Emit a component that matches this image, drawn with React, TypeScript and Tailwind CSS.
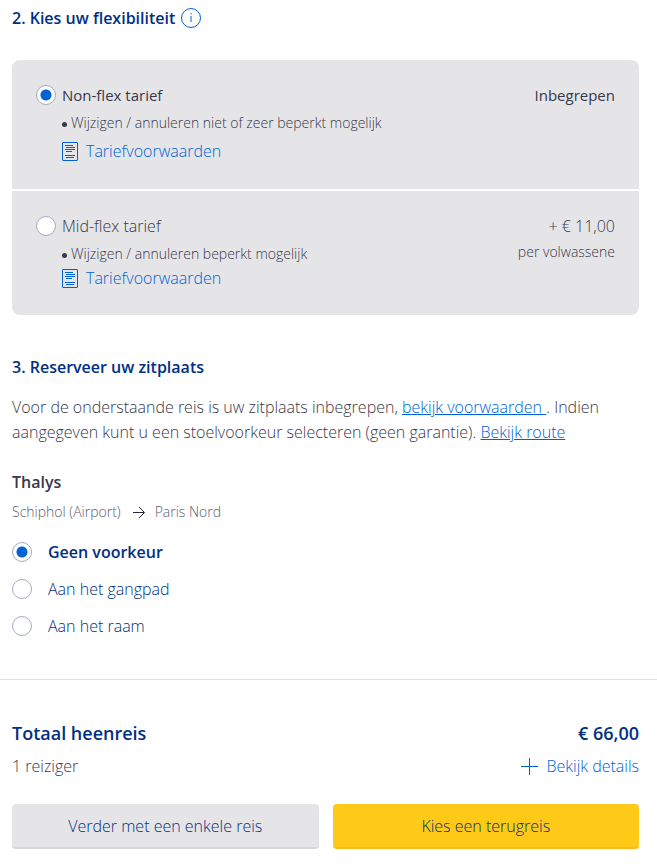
import type { ReactNode } from "react";

type RadioProps = { id: string; name: string; defaultChecked?: boolean };

function Radio({ id, name, defaultChecked }: RadioProps) {
  return (
    <input
      id={id}
      name={name}
      type="radio"
      defaultChecked={defaultChecked}
      className="size-5 shrink-0 appearance-none rounded-full border border-[#a3abc0] bg-white checked:bg-[radial-gradient(circle,#0063d3_5px,#fff_6px)]"
    />
  );
}

function DocumentIcon() {
  return (
    <svg width="16" height="19" viewBox="0 0 16 19" fill="none" stroke="#0063d3" className="shrink-0" aria-hidden="true">
      <rect x="0.5" y="0.5" width="15" height="18" rx="0.5" />
      <path d="M3 3.5h8M4 5.5h9M3 7.5h10M4 9.5h6M3 13.5h10M4 15.5h8" />
    </svg>
  );
}

type FareProps = {
  id: string;
  title: string;
  detail: string;
  price: string;
  note?: string;
  selected?: boolean;
  linkGap: string;
  className: string;
};

function Fare({ id, title, detail, price, note, selected, linkGap, className }: FareProps) {
  const weight = selected ? "text-[15px] font-medium" : "text-base font-light";
  return (
    <div className={`flex justify-between bg-[#e5e5e8] px-6 ${className}`}>
      <div className="flex gap-1.5">
        <div className="flex h-6 items-center">
          <Radio id={id} name="fare" defaultChecked={selected} />
        </div>
        <div>
          <label htmlFor={id} className={`block leading-6 ${weight}`}>
            {title}
          </label>
          <ul className="mt-1.5 text-sm leading-5">
            <li className="flex items-center gap-1">
              <span className="mt-0.5 size-[5px] rounded-full bg-[#38384a]" />
              {detail}
            </li>
          </ul>
          <a href="#tariefvoorwaarden" className={`flex items-center gap-2 leading-6 text-[#0063d3] ${linkGap}`}>
            <DocumentIcon />
            Tariefvoorwaarden
          </a>
        </div>
      </div>
      <div className="text-right">
        <p className={`leading-6 ${weight}`}>{price}</p>
        {note && <p className="mt-1 text-sm leading-5">{note}</p>}
      </div>
    </div>
  );
}

function Heading({ children }: { children: ReactNode }) {
  return <h2 className="leading-6 font-semibold text-[#003082]">{children}</h2>;
}

const seats = [
  { id: "geen", label: "Geen voorkeur" },
  { id: "gangpad", label: "Aan het gangpad" },
  { id: "raam", label: "Aan het raam" },
];

export default function App() {
  return (
    <main className="bg-white font-['Open_Sans',sans-serif] text-base font-light text-[#38384a]">
      <section className="pt-1.5 pr-[18px] pl-3">
        <div className="flex items-center gap-1.5">
          <Heading>2. Kies uw flexibiliteit</Heading>
          <button type="button" aria-label="Meer informatie">
            <svg width="20" height="20" viewBox="0 0 20 20" fill="none" stroke="#0063d3" aria-hidden="true">
              <circle cx="10" cy="10" r="9.5" />
              <path d="M10 8v6M10 5v1.5" />
            </svg>
          </button>
        </div>

        <div className="mt-[30px] flex flex-col gap-0.5 overflow-hidden rounded-lg">
          <Fare
            id="non-flex"
            title="Non-flex tarief"
            detail="Wijzigen / annuleren niet of zeer beperkt mogelijk"
            price="Inbegrepen"
            selected
            linkGap="mt-1.5"
            className="pt-[23px] pb-[26px]"
          />
          <Fare
            id="mid-flex"
            title="Mid-flex tarief"
            detail="Wijzigen / annuleren beperkt mogelijk"
            price="+ € 11,00"
            note="per volwassene"
            linkGap="mt-0.5"
            className="pt-[23px] pb-[25px]"
          />
        </div>

        <div className="mt-10">
          <Heading>3. Reserveer uw zitplaats</Heading>
        </div>
        <p className="mt-4 leading-[25px]">
          Voor de onderstaande reis is uw zitplaats inbegrepen,{" "}
          <a href="#voorwaarden" className="text-[#0063d3] underline">bekijk voorwaarden </a>. Indien aangegeven kunt u
          een stoelvoorkeur selecteren (geen garantie).{" "}
          <a href="#route" className="text-[#0063d3] underline">Bekijk route</a>
        </p>

        <h3 className="mt-[25px] leading-6 font-semibold">Thalys</h3>
        <p className="mt-2 flex items-center text-sm leading-5 text-[#5c5c6b]">
          Schiphol (Airport)
          <svg width="12" height="12" viewBox="0 0 12 12" fill="none" stroke="#29293a" className="mr-2.5 ml-3" aria-hidden="true">
            <path d="M0 6.5h11M6 1l5.5 5.5L6 12" />
          </svg>
          Paris Nord
        </p>

        <fieldset aria-label="Stoelvoorkeur" className="mt-[18px] flex flex-col gap-[13px] text-[#003082]">
          {seats.map((seat, i) => (
            <div key={seat.id} className="flex items-center gap-4">
              <Radio id={seat.id} name="seat" defaultChecked={i === 0} />
              <label htmlFor={seat.id} className={`leading-6 ${i === 0 ? "font-semibold" : ""}`}>
                {seat.label}
              </label>
            </div>
          ))}
        </fieldset>
      </section>

      <hr className="mt-[41px] border-[#e0e0e3]" />

      <section className="pt-[39px] pr-[18px] pb-4 pl-3">
        <div className="flex justify-between text-lg leading-7 font-semibold text-[#003082]">
          <h2>Totaal heenreis</h2>
          <p>€ 66,00</p>
        </div>
        <div className="mt-[7px] flex justify-between leading-6">
          <p>1 reiziger</p>
          <button type="button" className="flex items-center gap-2 text-[#0063d3]">
            <svg width="17" height="17" viewBox="0 0 17 17" fill="none" stroke="#0063d3" aria-hidden="true">
              <path d="M0 8.5h17M8.5 0v17" />
            </svg>
            Bekijk details
          </button>
        </div>
        <div className="mt-[26px] grid grid-cols-2 gap-3.5 text-[#003082]">
          <button type="button" className="h-[45px] rounded-sm border-b-2 border-[#d6d6da] bg-[#e5e5e8]">
            Verder met een enkele reis
          </button>
          <button type="button" className="h-[45px] rounded-sm border-b-2 border-[#ffb81c] bg-[#ffc917]">
            Kies een terugreis
          </button>
        </div>
      </section>
    </main>
  );
}
